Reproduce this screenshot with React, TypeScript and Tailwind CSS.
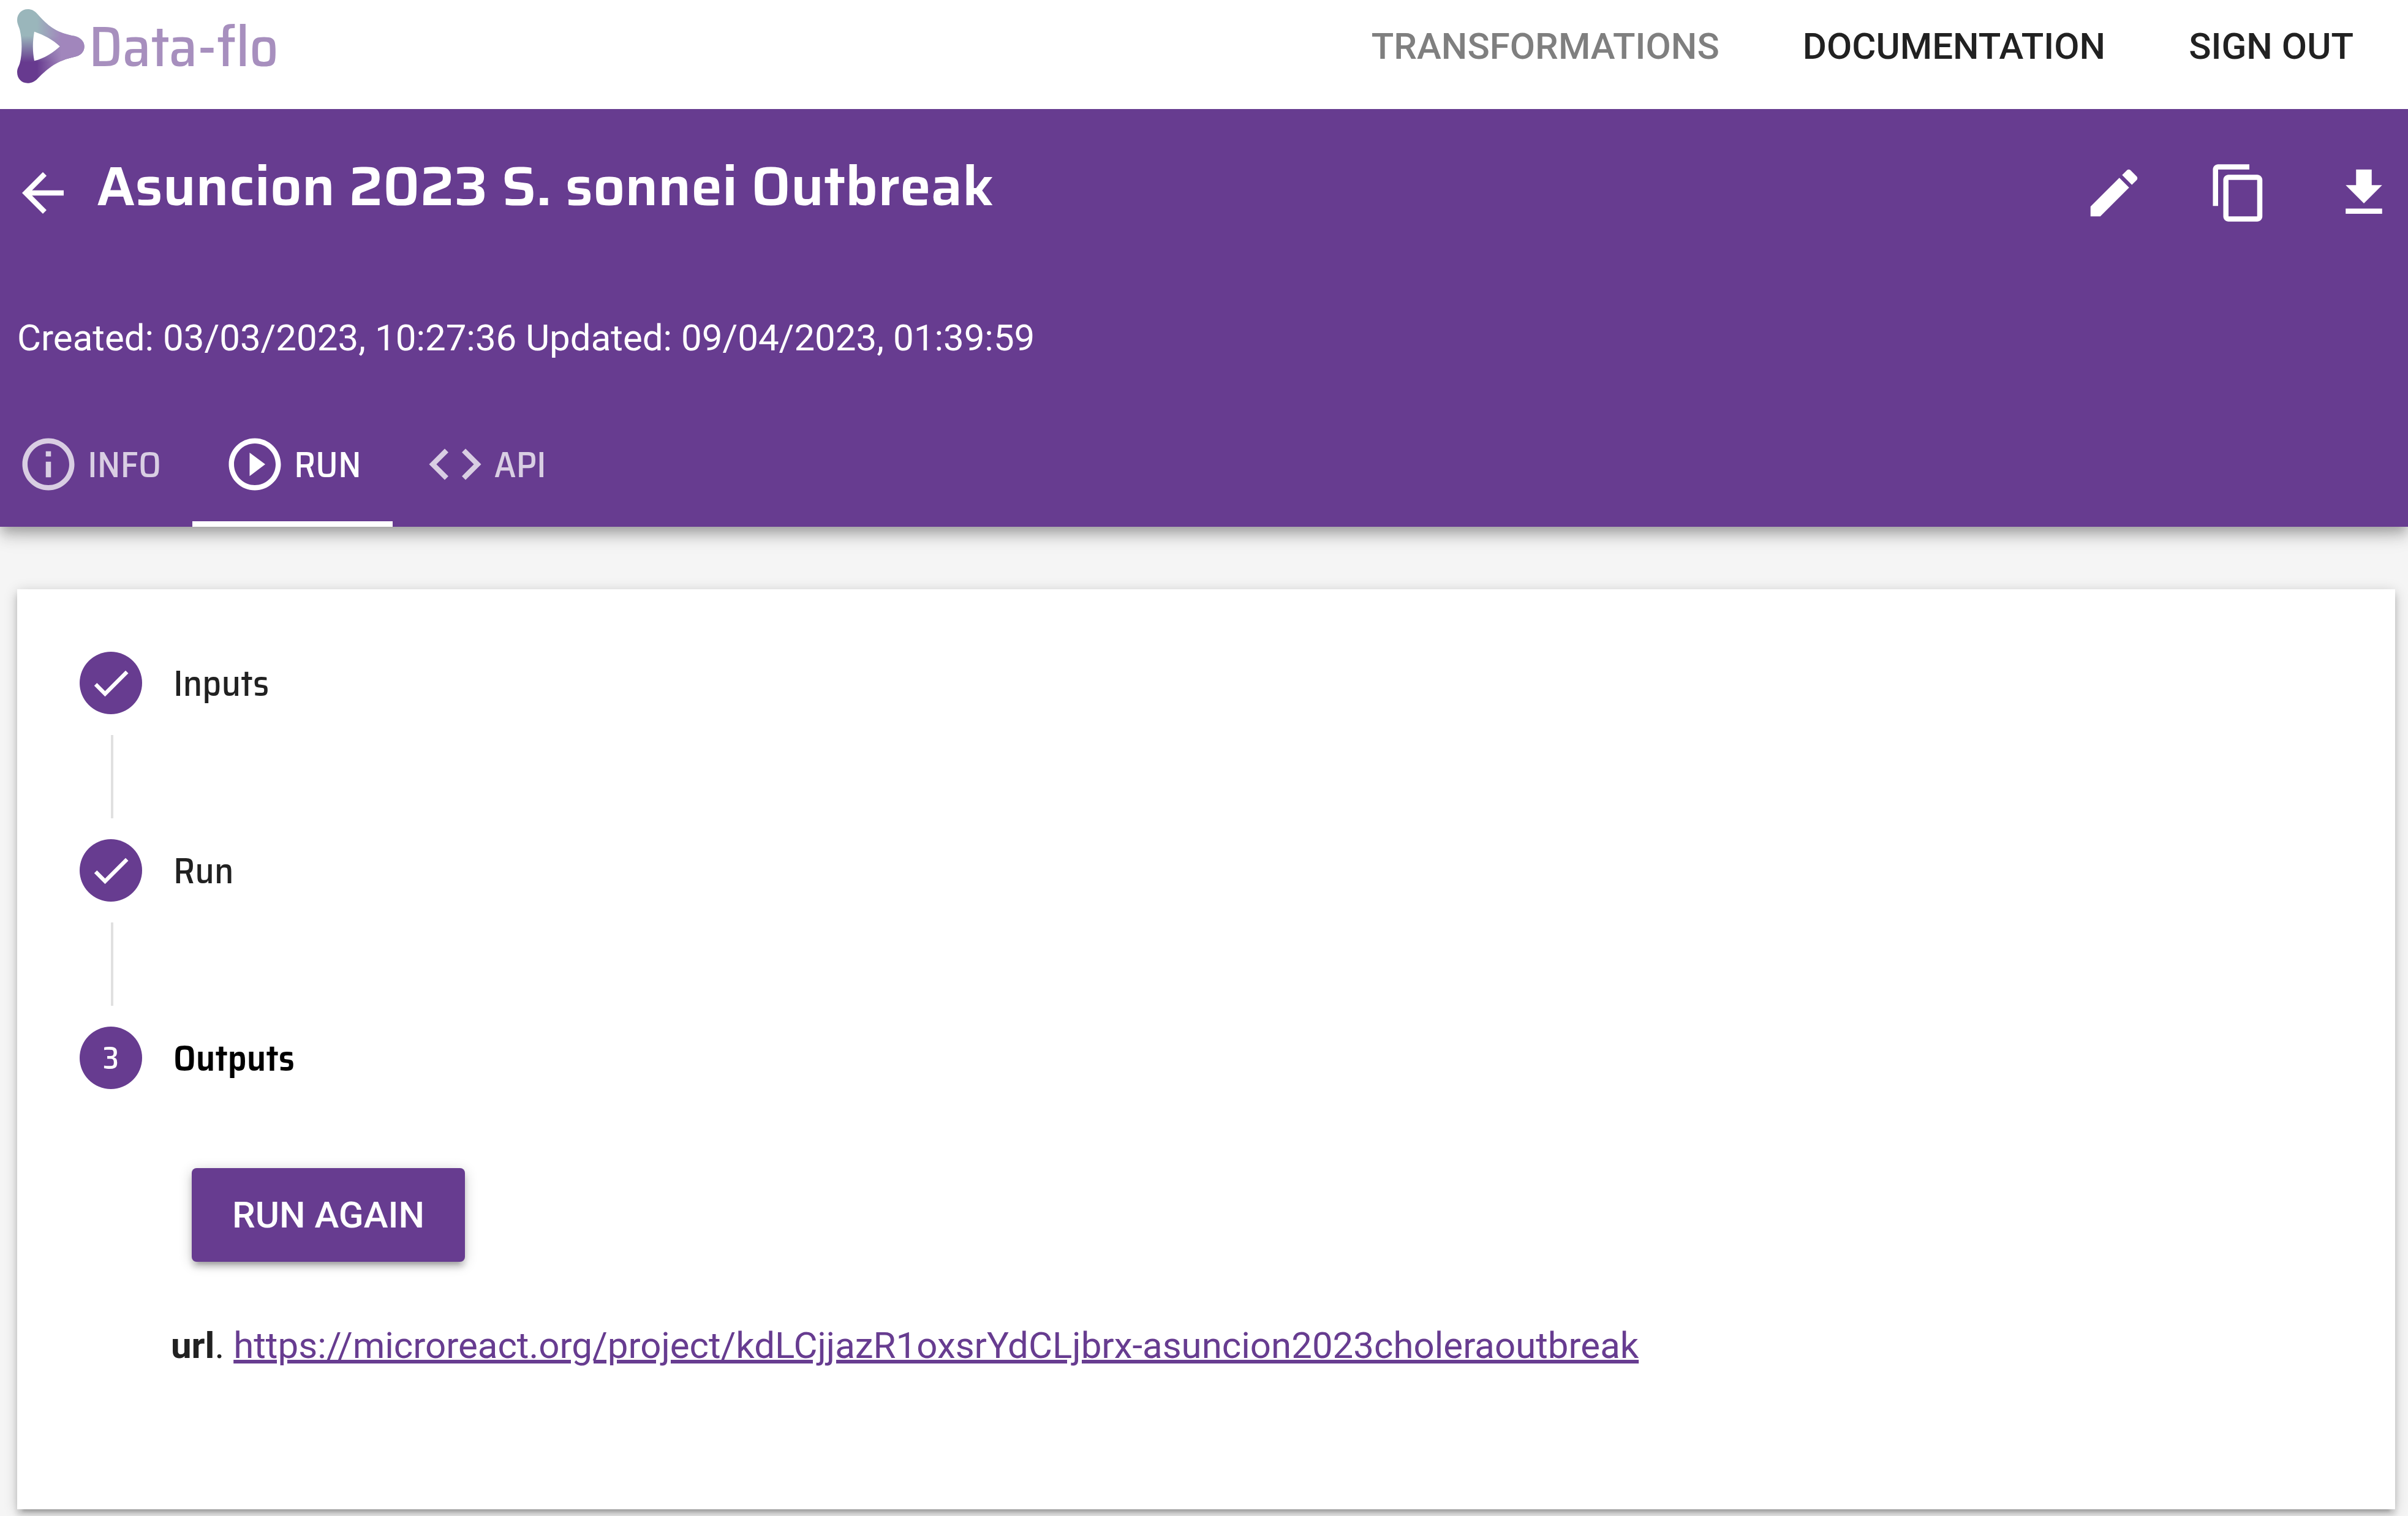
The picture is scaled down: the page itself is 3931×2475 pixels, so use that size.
import type { ComponentType, ReactNode } from "react";
import {
  MdArrowBack,
  MdCheck,
  MdCode,
  MdContentCopy,
  MdEdit,
  MdGetApp,
  MdInfoOutline,
  MdPlayCircleOutline,
} from "react-icons/md";

type IconType = ComponentType<{ className?: string }>;

function LogoMark() {
  return (
    <svg viewBox="83 45 330 363" className="h-[121px] w-[110px]" aria-hidden="true">
      <defs>
        <linearGradient id="stem" gradientUnits="userSpaceOnUse" x1="0" y1="175" x2="0" y2="305">
          <stop offset="0" stopColor="#9ab6bb" />
          <stop offset="1" stopColor="#673a8f" />
        </linearGradient>
        <linearGradient id="tip" gradientUnits="userSpaceOnUse" x1="180" y1="0" x2="300" y2="0">
          <stop offset="0" stopColor="#a186bc" stopOpacity="0" />
          <stop offset="1" stopColor="#a186bc" />
        </linearGradient>
        <path
          id="mark"
          d="M83 98C83 66 107 45 134 45C154 45 168 53 180 66C235 128 270 156 350 174C388 178 412 200 412 227C412 254 394 272 362 279C280 297 240 328 182 386C168 400 153 407 134 407C106 407 83 386 83 354C83 336 91 326 96 310C108 262 108 195 96 146C91 128 83 116 83 98ZM167 155C158 205 158 250 167 298C215 286 260 258 293 227C260 195 215 171 167 155Z"
          fillRule="evenodd"
        />
      </defs>
      <use href="#mark" fill="url(#stem)" />
      <use href="#mark" fill="url(#tip)" />
    </svg>
  );
}

function IconButton({ label, icon: Icon }: { label: string; icon: IconType }) {
  return (
    <button type="button" aria-label={label} className="flex size-[102px] items-center justify-center">
      <Icon className="size-[102px]" />
    </button>
  );
}

function Tab({ icon: Icon, children, active = false }: { icon: IconType; children: string; active?: boolean }) {
  return (
    <button
      type="button"
      role="tab"
      aria-selected={active}
      className={
        "flex h-[204px] items-center gap-[13px] border-y-[9px] border-t-transparent px-[51px] font-medium " +
        (active ? "border-b-white text-white" : "border-b-transparent text-white/75")
      }
    >
      <Icon className="size-[102px]" />
      {children}
    </button>
  );
}

function Step({ badge, label, active = false }: { badge: ReactNode; label: string; active?: boolean }) {
  return (
    <div className="flex items-center gap-[51px]">
      <span className="flex size-[102px] items-center justify-center rounded-full bg-[#673c90] text-[51px] font-medium text-white">
        {badge}
      </span>
      <span className={active ? "font-semibold text-black" : "font-medium text-[#212121]"}>{label}</span>
    </div>
  );
}

function Connector() {
  return <div className="my-[34px] ml-[51px] h-[136px] border-l-4 border-[#e0e0e0]" />;
}

export default function App() {
  return (
    <div className="min-h-screen bg-[#f5f5f5] pb-[11px] font-[Roboto,sans-serif] text-[60px] leading-[68px] text-[#212121]">
      <header className="relative z-10 flex h-[178px] items-start justify-between bg-white pl-[28px]">
        <a href="#home" className="flex items-center gap-[7px] pt-[15px]">
          <LogoMark />
          <span className="font-['Saira_SemiCondensed','Roboto_Condensed',sans-serif] text-[93px] leading-[121px] font-medium text-[#a78fbe]">
            Data-flo
          </span>
        </a>
        <nav className="flex gap-[136px] pt-[42px] pr-[89px] font-medium uppercase">
          <a href="#transformations" className="text-[#7f7f7f]">Transformations</a>
          <a href="#documentation">Documentation</a>
          <a href="#sign-out">Sign out</a>
        </nav>
      </header>

      <section className="relative bg-[#673c90] text-white shadow-[0_9px_17px_-4px_rgba(0,0,0,0.2),0_17px_21px_0_rgba(0,0,0,0.14),0_4px_43px_0_rgba(0,0,0,0.12)]">
        <div className="flex h-[239px] items-center pt-[35px] pr-[21px] pl-[19px]">
          <IconButton label="Back" icon={MdArrowBack} />
          <h1 className="flex-1 pb-[22px] pl-[37px] font-['Saira',sans-serif] text-[91px] leading-[102px] font-semibold">
            Asuncion 2023 S. sonnei Outbreak
          </h1>
          <div className="flex gap-[102px]">
            <IconButton label="Edit" icon={MdEdit} />
            <IconButton label="Copy" icon={MdContentCopy} />
            <IconButton label="Download" icon={MdGetApp} />
          </div>
        </div>
        <p className="px-[28px] pt-[101px] pb-[70px]">
          Created: 03/03/2023, 10:27:36 Updated: 09/04/2023, 01:39:59
        </p>
        <div
          role="tablist"
          className="-ml-[23px] flex font-['Saira_SemiCondensed','Roboto_Condensed',sans-serif]"
        >
          <Tab icon={MdInfoOutline}>INFO</Tab>
          <Tab icon={MdPlayCircleOutline} active>RUN</Tab>
          <Tab icon={MdCode}>API</Tab>
        </div>
      </section>

      <main className="mt-[102px] mr-[21px] ml-[28px] bg-white px-[102px] pt-[102px] pb-[233px] shadow-[0_4px_21px_rgba(0,0,0,0.2),0_9px_9px_rgba(0,0,0,0.14),0_13px_4px_-9px_rgba(0,0,0,0.12)]">
        <div className="font-['Saira_SemiCondensed','Roboto_Condensed',sans-serif]">
          <Step badge={<MdCheck className="size-[76px]" />} label="Inputs" />
          <Connector />
          <Step badge={<MdCheck className="size-[76px]" />} label="Run" />
          <Connector />
          <Step badge="3" label="Outputs" active />
        </div>
        <div className="pt-[129px] pl-[149px]">
          <button
            type="button"
            className="ml-[34px] h-[153px] rounded-[8px] bg-[#673c90] px-[66px] font-medium text-white uppercase shadow-[0_4px_21px_rgba(0,0,0,0.2),0_9px_9px_rgba(0,0,0,0.14),0_13px_4px_-9px_rgba(0,0,0,0.12)]"
          >
            Run again
          </button>
          <p className="pt-[103px]">
            <strong className="font-bold">url</strong>.{" "}
            <a
              href="https://microreact.org/project/kdLCjjazR1oxsrYdCLjbrx-asuncion2023choleraoutbreak"
              className="text-[#673c90] underline"
            >
              https://microreact.org/project/kdLCjjazR1oxsrYdCLjbrx-asuncion2023choleraoutbreak
            </a>
          </p>
        </div>
      </main>
    </div>
  );
}
